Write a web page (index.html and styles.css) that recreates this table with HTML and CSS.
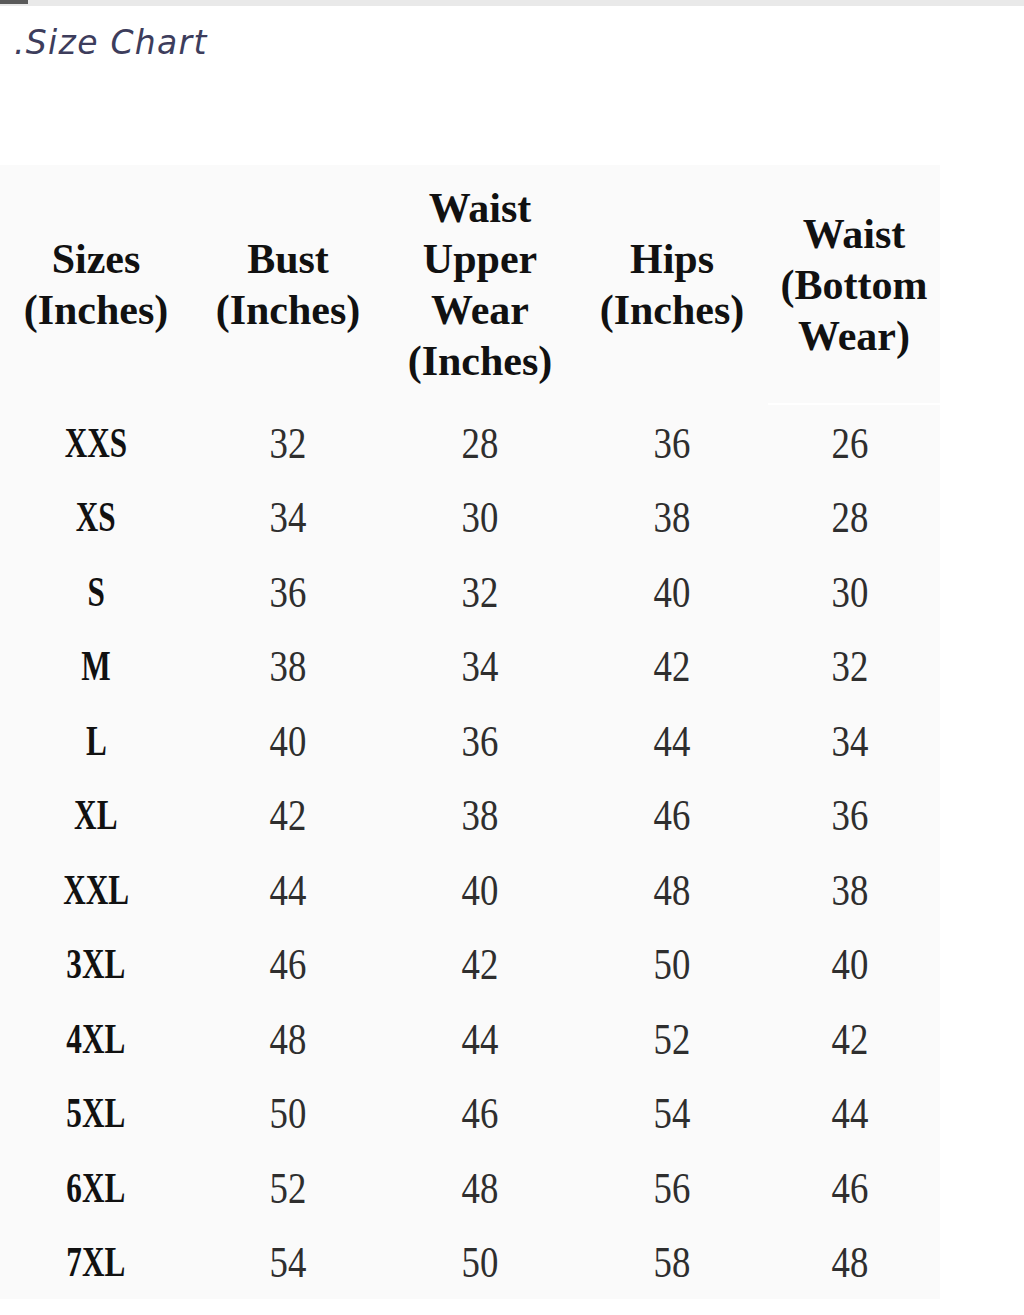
FILE: index.html
```html
<!DOCTYPE html>
<html>
<head>
<meta charset="utf-8">
<link rel="stylesheet" href="styles.css">
</head>
<body>
<div class="topbar"><div class="tab"></div></div>
<div class="title">.Size Chart</div>
<div class="chart">
  <div class="hcell"><div class="ln">Sizes</div><div class="ln">(Inches)</div></div>
  <div class="hcell"><div class="ln">Bust</div><div class="ln">(Inches)</div></div>
  <div class="hcell"><div class="ln">Waist</div><div class="ln">Upper</div><div class="ln">Wear</div><div class="ln">(Inches)</div></div>
  <div class="hcell"><div class="ln">Hips</div><div class="ln">(Inches)</div></div>
  <div class="hcell last"><div class="ln">Waist</div><div class="ln">(Bottom</div><div class="ln">Wear)</div></div>

  <div class="c sz"><span>XXS</span></div><div class="c"><span>32</span></div><div class="c"><span>28</span></div><div class="c"><span>36</span></div><div class="c end"><span>26</span></div>
  <div class="c sz"><span>XS</span></div><div class="c"><span>34</span></div><div class="c"><span>30</span></div><div class="c"><span>38</span></div><div class="c end"><span>28</span></div>
  <div class="c sz"><span>S</span></div><div class="c"><span>36</span></div><div class="c"><span>32</span></div><div class="c"><span>40</span></div><div class="c end"><span>30</span></div>
  <div class="c sz"><span>M</span></div><div class="c"><span>38</span></div><div class="c"><span>34</span></div><div class="c"><span>42</span></div><div class="c end"><span>32</span></div>
  <div class="c sz"><span>L</span></div><div class="c"><span>40</span></div><div class="c"><span>36</span></div><div class="c"><span>44</span></div><div class="c end"><span>34</span></div>
  <div class="c sz"><span>XL</span></div><div class="c"><span>42</span></div><div class="c"><span>38</span></div><div class="c"><span>46</span></div><div class="c end"><span>36</span></div>
  <div class="c sz"><span>XXL</span></div><div class="c"><span>44</span></div><div class="c"><span>40</span></div><div class="c"><span>48</span></div><div class="c end"><span>38</span></div>
  <div class="c sz"><span>3XL</span></div><div class="c"><span>46</span></div><div class="c"><span>42</span></div><div class="c"><span>50</span></div><div class="c end"><span>40</span></div>
  <div class="c sz"><span>4XL</span></div><div class="c"><span>48</span></div><div class="c"><span>44</span></div><div class="c"><span>52</span></div><div class="c end"><span>42</span></div>
  <div class="c sz"><span>5XL</span></div><div class="c"><span>50</span></div><div class="c"><span>46</span></div><div class="c"><span>54</span></div><div class="c end"><span>44</span></div>
  <div class="c sz"><span>6XL</span></div><div class="c"><span>52</span></div><div class="c"><span>48</span></div><div class="c"><span>56</span></div><div class="c end"><span>46</span></div>
  <div class="c sz"><span>7XL</span></div><div class="c"><span>54</span></div><div class="c"><span>50</span></div><div class="c"><span>58</span></div><div class="c end"><span>48</span></div>
</div>
</body>
</html>
```
FILE: styles.css
```css
html, body {
  margin: 0;
  padding: 0;
  background: #ffffff;
}
.topbar {
  height: 6px;
  background: #e9e9e9;
}
.tab {
  width: 28px;
  height: 4px;
  background: #5a5a5a;
}
.title {
  height: 159px;
  box-sizing: border-box;
  padding: 17px 0 0 14px;
  font-family: "DejaVu Sans", sans-serif;
  font-style: italic;
  font-weight: 300;
  font-size: 33px;
  letter-spacing: 1.3px;
  color: #3d3d5c;
  line-height: 40px;
}
.chart {
  width: 940px;
  background: #fafafa;
  display: grid;
  grid-template-columns: 192px 192px 192px 192px 172px;
  grid-template-rows: 240px repeat(12, 74.5px);
  font-family: "Liberation Serif", "Times New Roman", serif;
  color: #1a1a1a;
}
.hcell {
  display: flex;
  flex-direction: column;
  align-items: center;
  justify-content: center;
  font-weight: bold;
  font-size: 42px;
  color: #111;
}
.hcell.last {
  border-bottom: 2px solid #ffffff;
  box-sizing: border-box;
  padding-top: 2px;
}
.ln {
  line-height: 51px;
  white-space: nowrap;
}
.c {
  display: flex;
  align-items: center;
  justify-content: center;
  font-size: 40px;
}
.c.end {
  padding-right: 8px;
}
.c span {
  display: inline-block;
  transform: scale(0.92, 1.12);
  color: #2e2e2e;
}
.c.sz span {
  font-weight: bold;
  color: #111;
  transform: scale(0.78, 1.05);
}
```
